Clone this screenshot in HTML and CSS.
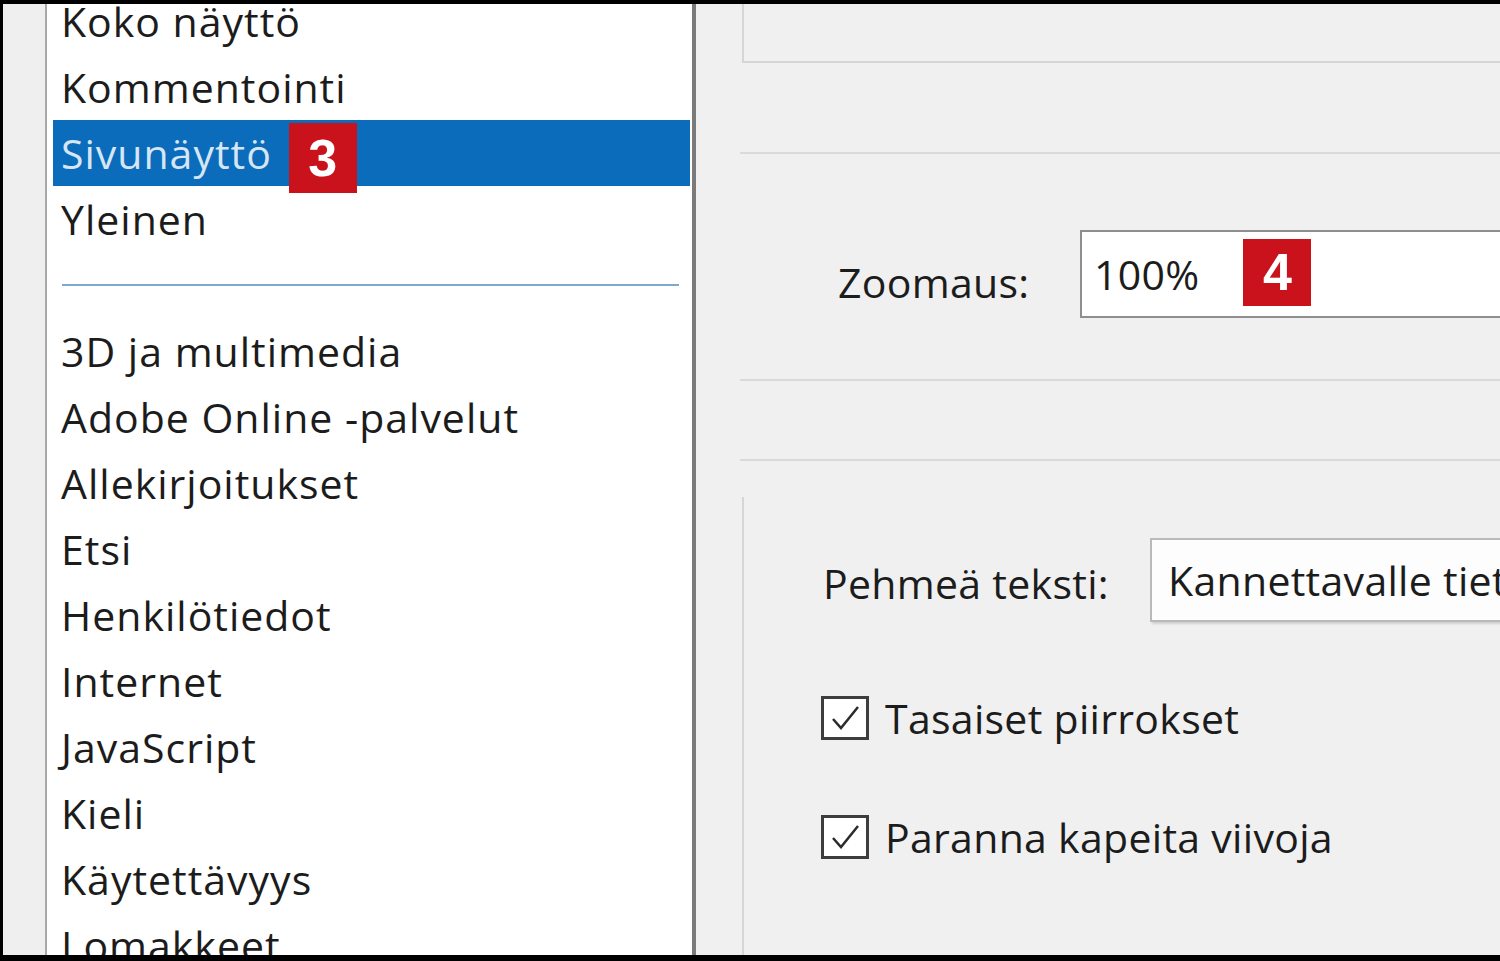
FILE: index.html
```html
<!DOCTYPE html>
<html lang="fi">
<head>
  <meta charset="UTF-8" />
  <title>Asetukset - Sivunäyttö</title>
  <link rel="stylesheet" href="styles.css">
</head>
<body>
  <div class="frame">
    <div class="gutter"></div>

    <div class="list-pane">
      <ul class="cat-list">
        <li>Koko näyttö</li>
        <li>Kommentointi</li>
        <li class="selected">Sivunäyttö <span class="badge badge-list">3</span></li>
        <li>Yleinen</li>
        <li class="divider"><span></span></li>
        <li>3D ja multimedia</li>
        <li>Adobe Online -palvelut</li>
        <li>Allekirjoitukset</li>
        <li>Etsi</li>
        <li>Henkilötiedot</li>
        <li>Internet</li>
        <li>JavaScript</li>
        <li>Kieli</li>
        <li>Käytettävyys</li>
        <li>Lomakkeet</li>
      </ul>
    </div>

    <div class="settings">
      <div class="top-area">
        <div class="top-box"></div>
      </div>

      <div class="rule rule-first"></div>

      <div class="zoom-row">
        <label class="zoom-label" for="zoom">Zoomaus:</label>
        <div class="zoom-field" id="zoom">
          <span>100%</span>
          <span class="badge badge-field">4</span>
        </div>
      </div>

      <div class="rule rule-second"></div>
      <div class="rule rule-third"></div>

      <div class="group">
        <div class="smooth-row">
          <span class="smooth-label">Pehmeä teksti:</span>
          <div class="dropdown">Kannettavalle tietokoneelle/LCD-näytölle</div>
        </div>

        <div class="check-row check-first">
          <span class="checkbox">
            <svg viewBox="0 0 42 38" width="42" height="38"><path d="M9 20 L17 29 L34 8" fill="none" stroke="#2b2b2b" stroke-width="2.5"/></svg>
          </span>
          <span class="check-label">Tasaiset piirrokset</span>
        </div>

        <div class="check-row check-second">
          <span class="checkbox">
            <svg viewBox="0 0 42 38" width="42" height="38"><path d="M9 20 L17 29 L34 8" fill="none" stroke="#2b2b2b" stroke-width="2.5"/></svg>
          </span>
          <span class="check-label">Paranna kapeita viivoja</span>
        </div>
      </div>
    </div>
  </div>
</body>
</html>
```

FILE: styles.css
```css
html, body {
  margin: 0;
  padding: 0;
  background-color: #000;
}
body {
  font-family: "Open Sans", "Noto Sans", sans-serif;
  font-size: 41px;
  color: #1c1c1c;
}
.frame {
  display: flex;
  width: 1497px;
  height: 951px;
  margin: 4px 0 0 3px;
  background-color: #f0f0f0;
  overflow: hidden;
}
.gutter {
  width: 42px;
  flex: none;
  background-color: #efefef;
}
.list-pane {
  width: 645px;
  flex: none;
  background-color: #fff;
  border-left: 2px solid #a8a8a8;
  border-right: 4px solid #7b7b7b;
  overflow: hidden;
}
.cat-list {
  list-style: none;
  margin: -16px 2px 0 6px;
  padding: 0;
  letter-spacing: 1px;
}
.cat-list li {
  display: flex;
  align-items: center;
  height: 66px;
  padding-left: 8px;
  white-space: nowrap;
}
.cat-list li.selected {
  background-color: #0a6cba;
  color: #d6e6f5;
}
.cat-list li.divider {
  padding-left: 9px;
  padding-right: 11px;
}
.cat-list li.divider span {
  display: block;
  width: 100%;
  height: 2px;
  background-color: #7fa7cf;
}
.badge {
  display: inline-flex;
  align-items: center;
  justify-content: center;
  width: 68px;
  background-color: #c9121c;
  color: #fff;
  font-family: "Liberation Sans", Arial, sans-serif;
  font-weight: bold;
  font-size: 52px;
  letter-spacing: 0;
}
.badge-list {
  height: 70px;
  margin-left: 17px;
  margin-top: 10px;
}
.badge-field {
  height: 67px;
  margin-left: 44px;
  margin-top: -4px;
}
.settings {
  flex: 1;
  display: flex;
  flex-direction: column;
  letter-spacing: 0.3px;
}
.top-area {
  height: 94px;
  padding-left: 46px;
  border-right: 4px solid #000;
}
.top-box {
  height: 57px;
  border-left: 2px solid #d6d6d6;
  border-bottom: 2px solid #d6d6d6;
}
.rule {
  height: 2px;
  margin-left: 44px;
  background-color: #dadada;
}
.rule-first {
  margin-top: 54px;
}
.zoom-row {
  display: flex;
  align-items: center;
  margin-top: 76px;
  padding-left: 142px;
}
.zoom-label {
  width: 242px;
  flex: none;
  margin-top: 16px;
}
.zoom-field {
  flex: 1;
  display: flex;
  align-items: center;
  height: 84px;
  padding-left: 12px;
  background-color: #fff;
  border: 2px solid #8e8e8e;
  border-right: none;
}
.rule-second {
  margin-top: 61px;
}
.rule-third {
  margin-top: 78px;
}
.group {
  flex: 1;
  margin-top: 36px;
  margin-left: 46px;
  padding-top: 41px;
  border-left: 2px solid #d6d6d6;
  border-right: 4px solid #000;
}
.smooth-row {
  display: flex;
  align-items: center;
  padding-left: 79px;
}
.smooth-label {
  width: 327px;
  flex: none;
  margin-top: 6px;
  white-space: nowrap;
}
.dropdown {
  flex: 1;
  height: 80px;
  line-height: 80px;
  padding-left: 16px;
  background-color: #fdfdfd;
  border: 2px solid #b9b9b9;
  border-right: none;
  box-shadow: 2px 2px 2px #d0d0d0;
  white-space: nowrap;
  overflow: hidden;
}
.check-row {
  display: flex;
  align-items: center;
  padding-left: 77px;
}
.check-first {
  margin-top: 68px;
}
.check-second {
  margin-top: 63px;
}
.checkbox {
  display: flex;
  align-items: center;
  justify-content: center;
  width: 42px;
  height: 38px;
  border: 3px solid #3d3d3d;
  background-color: #fff;
  flex: none;
}
.check-label {
  margin-left: 16px;
  white-space: nowrap;
}
```
